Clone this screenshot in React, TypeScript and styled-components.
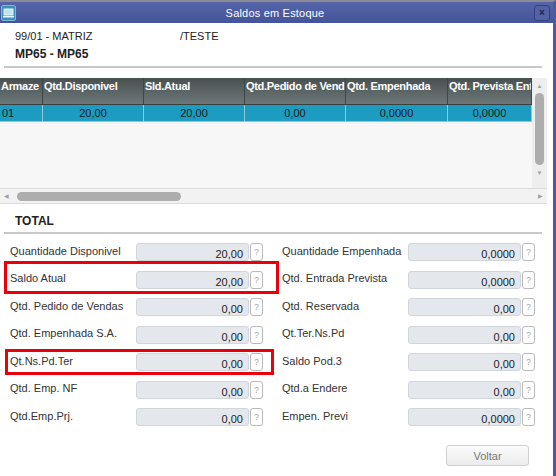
import styled, { createGlobalStyle } from 'styled-components'

const GlobalStyle = createGlobalStyle`
  html, body {
    margin: 0;
    padding: 0;
    background: #ffffff;
  }
  body {
    font-family: "Liberation Sans", Arial, sans-serif;
    font-size: 11px;
    color: #333;
  }
`

const Window = styled.div`
  position: relative;
  width: 556px;
  height: 476px;
  box-sizing: border-box;
  border-top: 2px solid #8a8c96;
  border-right: 3px solid #4b5c9e;
  background: #fff;
  overflow: hidden;
`

const TitleBar = styled.div`
  height: 21px;
  display: flex;
  align-items: center;
  padding: 0 3px 0 1px;
  background: linear-gradient(#5565a8, #45549a);
  color: #fff;
`

const TitleIcon = styled.div`
  width: 15px;
  height: 16px;
  box-sizing: border-box;
  border: 1px solid #7fb6d6;
  border-radius: 2px;
  background: #3c8fbf;
  display: flex;
  align-items: center;
  justify-content: center;
`

const Title = styled.div`
  flex: 1;
  text-align: center;
  font-size: 11px;
  letter-spacing: 0.2px;
`

const CloseButton = styled.div`
  width: 16px;
  height: 16px;
  box-sizing: border-box;
  border: 1px solid #33427e;
  border-radius: 3px;
  background: #5262a5;
  color: #1d2240;
  font-size: 10px;
  font-weight: bold;
  display: flex;
  align-items: center;
  justify-content: center;
`

const Header = styled.div`
  margin: 0 11px 0 4px;
  padding: 4px 0 3px 11px;
  border-bottom: 2px solid #c8c8c8;
`

const HeaderLine = styled.div`
  display: flex;
  height: 18px;
  align-items: center;
`

const HeaderCell = styled.div<{ $w?: number; $bold?: boolean }>`
  width: ${p => (p.$w ? `${p.$w}px` : 'auto')};
  font-weight: ${p => (p.$bold ? 'bold' : 'normal')};
  font-size: ${p => (p.$bold ? '12px' : '11px')};
  color: #222;
`

const GridWrap = styled.div`
  margin-top: 10px;
  width: 547px;
  display: grid;
  grid-template-columns: 532px 15px;
  grid-template-rows: 110px 16px;
  background: #f6f6f6;
`

const GridBody = styled.div`
  overflow: hidden;
  background: #f7f7f7;
`

const Row = styled.div<{ $head?: boolean }>`
  display: grid;
  grid-template-columns: 43px 101px 101px 101px 102px 84px;
  height: ${p => (p.$head ? '26px' : '16px')};
  background: ${p => (p.$head ? 'linear-gradient(#485050, #6f7878)' : '#1b9cc0')};
  color: ${p => (p.$head ? '#fff' : '#1a1a1a')};
  font-weight: ${p => (p.$head ? 'bold' : 'normal')};
  border-bottom: 1px solid ${p => (p.$head ? '#3a4040' : '#8fc7d8')};
`

const Cell = styled.div<{ $head?: boolean; $left?: boolean }>`
  box-sizing: border-box;
  padding: ${p => (p.$head ? '2px 1px 0' : '2px 2px 0')};
  white-space: nowrap;
  overflow: hidden;
  text-align: ${p => (p.$head || p.$left ? 'left' : 'center')};
  border-right: 1px solid ${p => (p.$head ? '#3e4646' : '#8fc7d8')};
  font-size: 11px;
  letter-spacing: ${p => (p.$head ? '-0.3px' : '0')};
`

const VScroll = styled.div`
  background: #eeeeee;
  display: flex;
  flex-direction: column;
  align-items: center;
  padding-top: 4px;
`

const VThumb = styled.div`
  width: 9px;
  height: 72px;
  border-radius: 5px;
  background: #adadad;
  margin: 3px 0 4px;
`

const Arrow = styled.div`
  color: #a0a0a0;
  font-size: 6px;
  line-height: 8px;
`

const HScroll = styled.div`
  grid-column: 1 / 3;
  border-top: 1px solid #dcdcdc;
  border-bottom: 1px solid #dcdcdc;
  background: #f2f2f2;
  display: flex;
  align-items: center;
  padding: 0 4px;
`

const HThumb = styled.div`
  width: 164px;
  height: 9px;
  border-radius: 5px;
  background: #adadad;
  margin-left: 8px;
`

const Spacer = styled.div`
  flex: 1;
`

const Section = styled.div`
  margin: 10px 11px 0 4px;
  padding: 0 0 4px 11px;
  border-bottom: 2px solid #c8c8c8;
  font-weight: bold;
  font-size: 12px;
  color: #222;
`

const Form = styled.div`
  display: grid;
  grid-template-columns: 252px 252px;
  column-gap: 20px;
  row-gap: 9.5px;
  padding: 9px 0 0 10px;
`

const Field = styled.div`
  display: grid;
  grid-template-columns: 125px 113px 13px;
  column-gap: 1px;
  align-items: center;
  height: 18px;
`

const Label = styled.div`
  font-size: 11px;
  color: #333;
  margin-top: -3px;
`

const Value = styled.div`
  height: 18px;
  box-sizing: border-box;
  border: 1px solid #d2d6dc;
  border-radius: 3px;
  background: #e4e7ec;
  text-align: right;
  padding: 4px 5px 0 0;
  font-size: 11px;
  color: #222;
`

const Help = styled.div`
  height: 18px;
  box-sizing: border-box;
  border: 1px solid #b9b9b9;
  border-radius: 3px;
  background: #fff;
  color: #aaa;
  font-size: 9px;
  text-align: center;
  padding-top: 3px;
`

const Footer = styled.div`
  display: flex;
  justify-content: flex-end;
  padding: 19px 24px 0 0;
`

const Button = styled.div`
  width: 83px;
  height: 21px;
  box-sizing: border-box;
  border: 1px solid #cfcfcf;
  border-radius: 3px;
  background: linear-gradient(#fbfbfb, #ececec);
  color: #777;
  font-size: 11px;
  display: flex;
  align-items: center;
  justify-content: center;
`

// red annotation frames drawn over the form
const Mark = styled.div<{ $x: number; $y: number; $w: number; $h: number }>`
  position: absolute;
  left: ${p => p.$x}px;
  top: ${p => p.$y}px;
  width: ${p => p.$w}px;
  height: ${p => p.$h}px;
  box-sizing: border-box;
  border: 3px solid #e8000b;
  pointer-events: none;
`

const columns = ['Armaze', 'Qtd.Disponivel', 'Sld.Atual', 'Qtd.Pedido de Vend', 'Qtd. Empenhada', 'Qtd. Prevista Ent']
const rowData = ['01', '20,00', '20,00', '0,00', '0,0000', '0,0000']

const leftFields = [
  ['Quantidade Disponivel', '20,00'],
  ['Saldo Atual', '20,00'],
  ['Qtd. Pedido de Vendas', '0,00'],
  ['Qtd. Empenhada S.A.', '0,00'],
  ['Qt.Ns.Pd.Ter', '0,00'],
  ['Qtd. Emp. NF', '0,00'],
  ['Qtd.Emp.Prj.', '0,00'],
]

const rightFields = [
  ['Quantidade Empenhada', '0,0000'],
  ['Qtd. Entrada Prevista', '0,0000'],
  ['Qtd. Reservada', '0,00'],
  ['Qt.Ter.Ns.Pd', '0,00'],
  ['Saldo Pod.3', '0,00'],
  ['Qtd.a Endere', '0,00'],
  ['Empen. Previ', '0,0000'],
]

function MonitorIcon() {
  return (
    <svg width="11" height="10" viewBox="0 0 11 10">
      <rect x="1" y="1" width="9" height="6" fill="#bfe3f3" stroke="#e8f6fc" strokeWidth="1" />
      <rect x="0" y="8" width="11" height="1.5" fill="#e8f6fc" />
    </svg>
  )
}

export default function App() {
  return (
    <>
      <GlobalStyle />
      <Window>
        <TitleBar>
          <TitleIcon>
            <MonitorIcon />
          </TitleIcon>
          <Title>Saldos em Estoque</Title>
          <CloseButton>×</CloseButton>
        </TitleBar>

        <Header>
          <HeaderLine>
            <HeaderCell $w={165}>99/01 - MATRIZ</HeaderCell>
            <HeaderCell>/TESTE</HeaderCell>
          </HeaderLine>
          <HeaderLine>
            <HeaderCell $bold>MP65 - MP65</HeaderCell>
          </HeaderLine>
        </Header>

        <GridWrap>
          <GridBody>
            <Row $head>
              {columns.map(c => (
                <Cell key={c} $head>{c}</Cell>
              ))}
            </Row>
            <Row>
              {rowData.map((v, i) => (
                <Cell key={i} $left={i === 0}>{v}</Cell>
              ))}
            </Row>
          </GridBody>
          <VScroll>
            <Arrow>▲</Arrow>
            <VThumb />
            <Arrow>▼</Arrow>
          </VScroll>
          <HScroll>
            <Arrow>◀</Arrow>
            <HThumb />
            <Spacer />
            <Arrow>▶</Arrow>
          </HScroll>
        </GridWrap>

        <Section>TOTAL</Section>

        <Form>
          {leftFields.map((f, i) => [
            <Field key={`l${i}`}>
              <Label>{f[0]}</Label>
              <Value>{f[1]}</Value>
              <Help>?</Help>
            </Field>,
            <Field key={`r${i}`}>
              <Label>{rightFields[i][0]}</Label>
              <Value>{rightFields[i][1]}</Value>
              <Help>?</Help>
            </Field>,
          ])}
        </Form>

        <Footer>
          <Button>Voltar</Button>
        </Footer>

        <Mark $x={4} $y={259} $w={275} $h={33} />
        <Mark $x={5} $y={347} $w={269} $h={26} />
      </Window>
    </>
  )
}
